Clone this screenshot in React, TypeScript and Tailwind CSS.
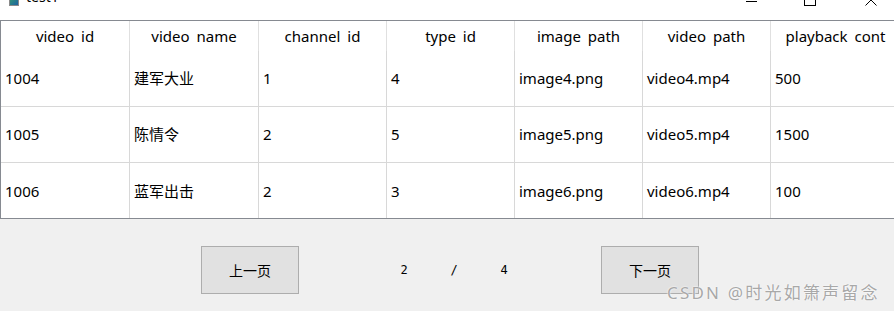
import React from "react"

const cols = [
  { title: "video id", w: "w-[129px]" },
  { title: "video name", w: "w-[129px]" },
  { title: "channel id", w: "w-[128px]" },
  { title: "type id", w: "w-[128px]" },
  { title: "image path", w: "w-[128px]" },
  { title: "video path", w: "w-[128px]" },
  { title: "playback cont", w: "w-[130px]" },
]

const rows = [
  ["1004", "建军大业", "1", "4", "image4.png", "video4.mp4", "500"],
  ["1005", "陈情令", "2", "5", "image5.png", "video5.mp4", "1500"],
  ["1006", "蓝军出击", "2", "3", "image6.png", "video6.mp4", "100"],
]

const font = "font-['Noto_Sans','Noto_Sans_CJK_SC',sans-serif]"

export default function App() {
  return (
    <div className={`w-[894px] h-[311px] overflow-hidden bg-[#f0f0f0] relative ${font}`}>
      {/* Title bar (cut off at top) */}
      <div className="h-[20px] bg-white flex items-start overflow-hidden">
        <div className="ml-[9px] -mt-[4px] w-[10px] h-[10px] border border-[#8a8a8a] bg-gradient-to-br from-[#3c9a6a] to-[#1f5fa0]" />
        <span className="ml-[7px] -mt-[13px] text-[14px] text-black leading-[20px]">test1</span>
        <div className="ml-auto flex items-start">
          <div className="mt-[1px] w-[11px] h-[1px] bg-black mr-[47px]" />
          <div className="-mt-[6px] w-[12px] h-[12px] border border-black mr-[49px]" />
          <svg className="-mt-[6px] mr-[17px]" width="12" height="12" viewBox="0 0 12 12">
            <path d="M0.5 0.5 L11.5 11.5 M11.5 0.5 L0.5 11.5" stroke="#000" strokeWidth="1" />
          </svg>
        </div>
      </div>

      {/* Table */}
      <div className="h-[199px] bg-white border-t border-l border-b border-[#868a91] overflow-hidden">
        <div className="flex h-[30px]">
          {cols.map((c, i) => (
            <div
              key={i}
              className={`${c.w} shrink-0 border-r border-[#e0e0e0] flex justify-center text-[15px] text-black leading-[30px] [word-spacing:3px] whitespace-nowrap`}
            >
              {c.title}
            </div>
          ))}
        </div>
        {rows.map((r, ri) => (
          <div
            key={ri}
            className={`flex ${ri < 2 ? "h-[56px] border-b border-[#d8d8d8]" : "h-[56px]"}`}
          >
            {r.map((cell, ci) => (
              <div
                key={ci}
                className={`${cols[ci].w} shrink-0 border-r border-[#d8d8d8] flex items-center pl-[4px] text-[15px] text-black whitespace-nowrap`}
              >
                {cell}
              </div>
            ))}
          </div>
        ))}
      </div>

      {/* Pager */}
      <div className="flex items-start h-[92px] pt-[27px]">
        <button className="ml-[201px] w-[98px] h-[48px] bg-[#e1e1e1] border border-[#adadad] text-[14px] text-black">
          上一页
        </button>
        <div className="ml-[80px] h-[48px] flex items-center text-[12px] text-black font-['DejaVu_Sans_Mono',monospace]">
          <span className="w-[50px] text-center">2</span>
          <span className="w-[50px] text-center">/</span>
          <span className="w-[50px] text-center">4</span>
        </div>
        <button className="ml-[72px] w-[98px] h-[48px] bg-[#e1e1e1] border border-[#adadad] text-[14px] text-black">
          下一页
        </button>
      </div>

      {/* Watermark */}
      <div className="absolute left-[667px] top-[280px] text-[17px] tracking-[2.2px] text-[#a8a8a8] whitespace-nowrap [text-shadow:0_0_2px_#ffffff,0_0_1px_#ffffff]">
        CSDN @时光如箫声留念
      </div>
    </div>
  )
}
